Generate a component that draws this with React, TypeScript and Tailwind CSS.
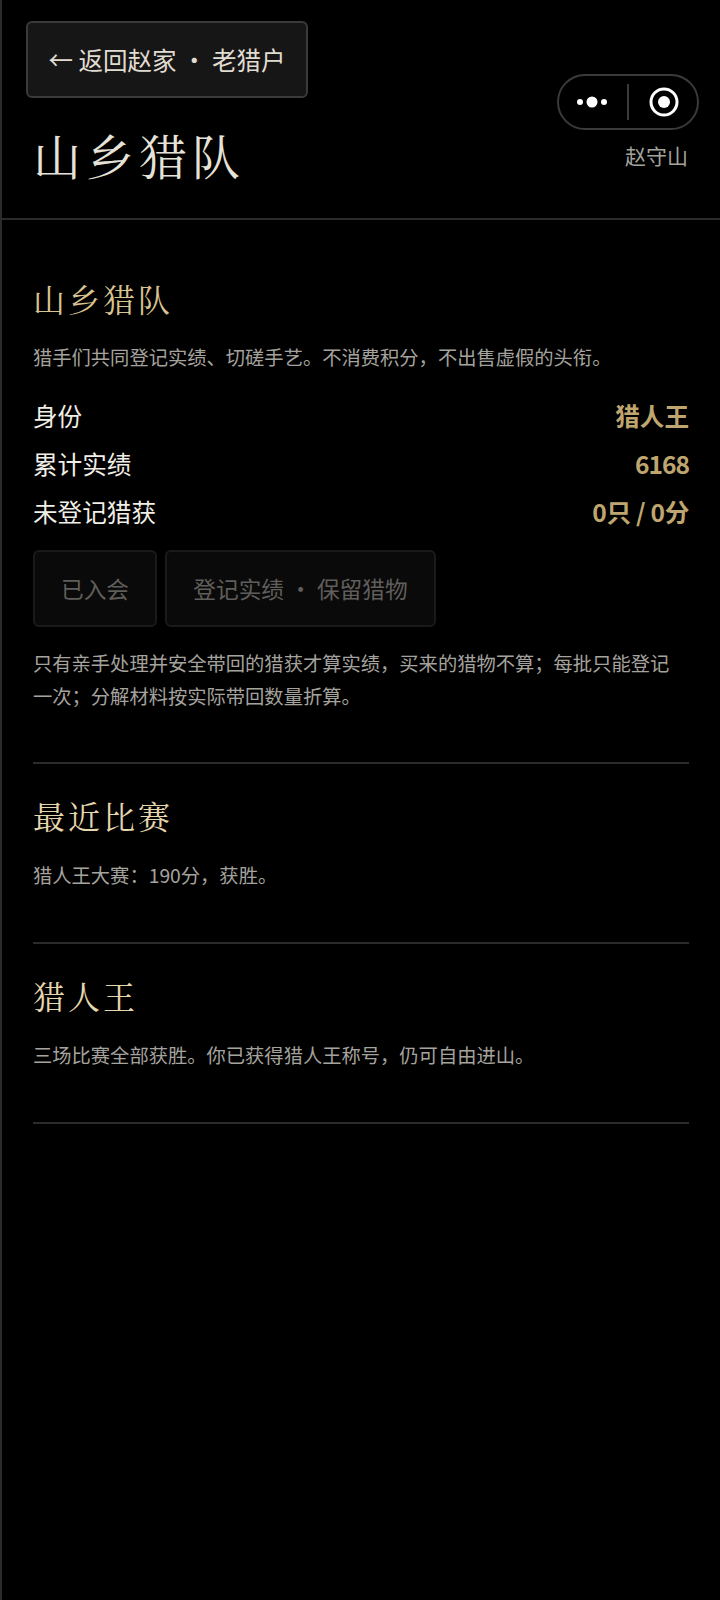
import React from 'react';

const sans = 'font-["Noto_Sans_CJK_SC","Noto_Sans",sans-serif]';
const serif = 'font-["Noto_Serif_CJK_SC","Noto_Sans_CJK_SC",serif]';

const stats = [
    { label: '身份', value: '猎人王', track: '' },
    { label: '累计实绩', value: '6168', track: 'tracking-[-1px]' },
    { label: '未登记猎获', value: '0只 / 0分', track: 'tracking-[-0.3px]' },
];

const Section: React.FC<{ title: string; text: string }> = ({ title, text }) => {
    return (
        <section className="border-b-2 border-[#2c2b29] pt-[27px] pb-[50px]">
            <h2 className={`${serif} text-[32px] leading-[48px] tracking-[3px] font-normal text-[#e6d6ae]`}>{title}</h2>
            <p className="mt-[20px] text-[19.3px] leading-[33px] text-[#a5a39e]">{text}</p>
        </section>
    );
};

const App: React.FC = () => {
    return (
        <div className={`${sans} relative min-h-[1600px] w-[720px] bg-black border-l-2 border-[#2c2b29] text-[#e8e4da]`}>
            <header className="h-[220px] border-b-2 border-[#2c2b29] px-[31px] pt-[21px]">
                <button className="-ml-[7px] flex h-[77px] w-[282px] items-center justify-center rounded-[6px] border-2 border-[#3a3a3a] bg-[#161616] pt-[2px] text-[24.5px] text-[#e0dcd2]">
                    ← 返回赵家 ・ 老猎户
                </button>
                <h1 className={`${serif} mt-[21px] text-[48px] leading-[72px] tracking-[5px] font-normal text-[#e6e2d8]`}>山乡猎队</h1>
            </header>

            <div className="absolute right-[21px] top-[74px] flex h-[56px] w-[142px] items-center rounded-full border-2 border-[#3a3a3a] bg-black">
                <svg width="32" height="16" viewBox="0 0 32 16" className="ml-[17px]">
                    <circle cx="4" cy="8" r="3" fill="#fff" />
                    <circle cx="16" cy="8" r="5.5" fill="#fff" />
                    <circle cx="28" cy="8" r="3" fill="#fff" />
                </svg>
                <div className="ml-[19px] h-[36px] w-[2px] bg-[#3a3a3a]" />
                <svg width="30" height="30" viewBox="0 0 30 30" className="ml-[20px]">
                    <circle cx="15" cy="15" r="13" fill="none" stroke="#fff" strokeWidth="3" />
                    <circle cx="15" cy="15" r="6" fill="#fff" />
                </svg>
            </div>
            <div className="absolute right-[32px] top-[140px] text-[21px] leading-[30px] text-[#a5a39e]">赵守山</div>

            <main className="px-[31px] pt-[54px]">
                <section className="border-b-2 border-[#2c2b29] pb-[49px]">
                    <h2 className={`${serif} text-[32px] leading-[48px] tracking-[3px] font-normal text-[#d8c391]`}>山乡猎队</h2>
                    <p className="mt-[19px] text-[19.3px] leading-[33px] text-[#a5a39e]">猎手们共同登记实绩、切磋手艺。不消费积分，不出售虚假的头衔。</p>
                    <div className="mt-[17px] flex flex-col">
                        {stats.map((s) => (
                            <div key={s.label} className="flex h-[48px] items-center justify-between text-[24.6px]">
                                <span className="text-[#f1eee6]">{s.label}</span>
                                <span className={`font-semibold text-[#bfa671] ${s.track}`}>{s.value}</span>
                            </div>
                        ))}
                    </div>
                    <div className="mt-[15px] flex gap-[8px] text-[22.7px] text-[#605e5a]">
                        <div className="flex h-[77px] w-[124px] items-center justify-center rounded-[6px] border-2 border-[#1a1a1a] bg-[#0a0a0a] pt-[2px]">已入会</div>
                        <div className="flex h-[77px] w-[271px] items-center justify-center rounded-[6px] border-2 border-[#1a1a1a] bg-[#0a0a0a] pt-[2px]">登记实绩 ・ 保留猎物</div>
                    </div>
                    <p className="mt-[20px] pr-[14px] text-[19.3px] leading-[33px] text-[#a5a39e]">只有亲手处理并安全带回的猎获才算实绩，买来的猎物不算；每批只能登记一次；分解材料按实际带回数量折算。</p>
                </section>
                <Section title="最近比赛" text="猎人王大赛：190分，获胜。" />
                <Section title="猎人王" text="三场比赛全部获胜。你已获得猎人王称号，仍可自由进山。" />
            </main>
        </div>
    );
};

export default App;
